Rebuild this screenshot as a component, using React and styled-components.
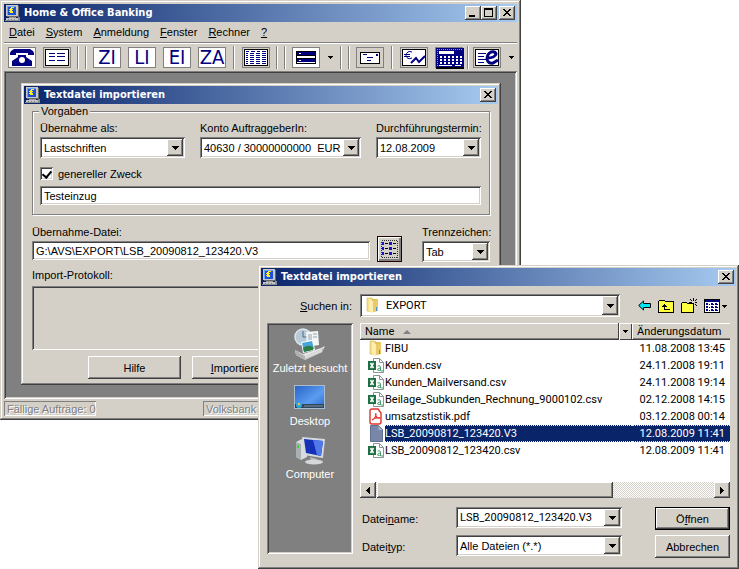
import React from "react";
import styled, { createGlobalStyle, css } from "styled-components";

const face = "#d4d0c8";
const navy = "#000080";
const msSans = `"Liberation Sans", Arial, sans-serif`;
const tahoma = `Roboto, "Liberation Sans", sans-serif`;
const caption = `"DejaVu Sans Condensed", "DejaVu Sans", sans-serif`;

const raised = css`
	box-shadow: inset -1px -1px #404040, inset 1px 1px #fff,
		inset -2px -2px #808080;
`;

const sunken = css`
	box-shadow: inset 1px 1px #808080, inset -1px -1px #fff,
		inset 2px 2px #404040, inset -2px -2px ${face};
`;

const GlobalStyle = createGlobalStyle`
	* {
		box-sizing: border-box;
	}

	body {
		margin: 0;
		background: #fff;
		color: #000;
		font-family: ${msSans};
		font-size: 11px;
		line-height: 12px;
	}

	button, input, select {
		margin: 0;
		border: 0;
		padding: 0;
		border-radius: 0;
		color: inherit;
		font: inherit;
	}

	u {
		text-underline-offset: 1px;
	}

	svg {
		display: block;
	}
`;

const Desktop = styled.main`
	position: relative;
	min-height: 100vh;
	overflow: hidden;
`;

/* ---------- windows ---------- */

const Window = styled.section`
	padding: ${({ $frame }) => $frame || 3}px;
	background: ${face};
	box-shadow: inset -1px -1px #404040, inset 1px 1px ${face},
		inset -2px -2px #808080, inset 2px 2px #fff;
`;

const MainWindow = styled(Window)`
	position: absolute;
	top: 0;
	left: 0;
	width: calc(100% - 218px);
`;

const FileWindow = styled(Window)`
	position: absolute;
	top: 265px;
	left: 258px;
	right: 0;
`;

const Caption = styled.header`
	display: flex;
	align-items: center;
	height: 18px;
	padding: 0 2px 0 1px;
	background: linear-gradient(to right, #0a246a, #a6caf0);
	color: #fff;
`;

const CaptionText = styled.h1`
	flex: 1;
	margin: 0 0 0 3px;
	font: bold 11px/16px ${caption};
	white-space: nowrap;
`;

const CaptionButton = styled.button`
	display: grid;
	place-items: center;
	width: 16px;
	height: 14px;
	margin-left: ${({ $apart }) => ($apart ? 2 : 0)}px;
	background: ${face};
	${raised}
`;

/* ---------- main window ---------- */

const MenuBar = styled.nav`
	display: flex;
	gap: 11px;
	height: 22px;
	padding: 4px 5px;
	border-bottom: 1px solid #fff;
	box-shadow: inset 0 -1px #808080;
`;

const MenuItem = styled.button`
	background: none;
	line-height: 13px;
`;

const Toolbar = styled.div`
	display: flex;
	align-items: center;
	gap: 7px;
	height: 27px;
	padding: 0 4px;
`;

const ToolButton = styled.button`
	display: grid;
	place-items: center;
	flex: none;
	width: 28px;
	height: 21px;
	border: 1px solid #808080;
	background: ${({ $plain }) => ($plain ? face : "#fff")};
	color: ${navy};
	font: 20px/19px "Liberation Sans Narrow", "DejaVu Sans Condensed", sans-serif;
`;

const DropButton = styled.button`
	display: grid;
	place-items: center;
	flex: none;
	width: 7px;
	height: 21px;
	background: none;
`;

const Divider = styled.span`
	flex: none;
	width: 2px;
	height: 23px;
	margin: 0 ${({ $tight }) => ($tight ? -3 : 0)}px;
	border-left: 1px solid #808080;
	border-right: 1px solid #fff;
`;

const DoubleDivider = styled.span`
	display: flex;
	flex: none;
	justify-content: space-between;
	width: 10px;
	margin: 0 -1px;
`;

const Workspace = styled.div`
	padding: 12px 16px 14px 17px;
	background: #808080;
	${sunken}
`;

const StatusBar = styled.footer`
	display: flex;
	justify-content: space-between;
	padding-top: 2px;
	color: #808080;
	text-shadow: 1px 1px #fff;
`;

const StatusPane = styled.span`
	width: ${({ $wide }) => ($wide ? "314px" : "92px")};
	height: 15px;
	padding: 1px 3px;
	box-shadow: inset 1px 1px #808080, inset -1px -1px #fff;
	line-height: 14px;
	white-space: nowrap;
`;

/* ---------- form parts ---------- */

const Field = styled.div`
	display: flex;
	flex-direction: column;
	gap: 3px;
	min-width: 0;
`;

const Label = styled.label`
	line-height: 12px;
	white-space: nowrap;
`;

const TextBox = styled.input`
	width: 100%;
	height: 19px;
	padding: 0 4px;
	background: #fff;
	${sunken}
`;

const ComboBox = styled.div`
	display: flex;
	position: relative;
	height: ${({ $height }) => $height || 21}px;
	padding: 2px;
	background: #fff;
	${sunken}
`;

const ComboSelect = styled.select`
	flex: 1;
	min-width: 0;
	padding-left: ${({ $indent }) => $indent || 2}px;
	appearance: none;
	background: transparent;
	outline: 0;
	font-family: ${({ $wide }) => ($wide ? tahoma : msSans)};
`;

const ComboArrow = styled.span`
	display: grid;
	place-items: center;
	position: absolute;
	top: 2px;
	right: 2px;
	bottom: 2px;
	width: 16px;
	background: ${face};
	pointer-events: none;
	${raised}
`;

const ComboIcon = styled.span`
	position: absolute;
	top: 3px;
	left: 5px;
	pointer-events: none;
`;

const PushButton = styled.button`
	height: 23px;
	background: ${face};
	border: ${({ $default }) => ($default ? "1px solid #000" : "0")};
	${raised}
`;

/* ---------- import dialog ---------- */

const ImportBody = styled.form`
	padding: 1px 8px 3px;
`;

const Group = styled.fieldset`
	min-width: 0;
	margin: 0;
	padding: 4px 8px 9px 7px;
	border: 1px solid #808080;
	box-shadow: 1px 1px #fff, inset 1px 1px #fff;
`;

const GroupTitle = styled.legend`
	margin-left: -1px;
	padding: 0 2px;
	background: ${face};
	line-height: 13px;
`;

const FieldColumns = styled.div`
	display: grid;
	grid-template-columns: 145fr 161fr 105fr;
	column-gap: 15px;
`;

const CheckRow = styled.div`
	display: flex;
	align-items: center;
	gap: 5px;
	margin: 9px 0 6px;
`;

const CheckBox = styled.input`
	position: relative;
	width: 13px;
	height: 13px;
	appearance: none;
	background: #fff;
	${sunken}

	&:checked::after {
		content: "";
		position: absolute;
		top: 2px;
		left: 4px;
		width: 4px;
		height: 7px;
		border: solid #000;
		border-width: 0 2px 2px 0;
		transform: rotate(40deg);
	}
`;

const FileRow = styled.div`
	display: grid;
	grid-template-columns: 1fr 25px 68px;
	margin-top: 11px;
`;

const BrowseButton = styled.button`
	display: grid;
	place-items: center;
	align-self: end;
	height: 26px;
	border: 1px solid #200000;
	background: ${face};
	box-shadow: inset 1px 1px #fff, inset -1px -1px #808080,
		inset -2px -2px #808080;
`;

const SourceField = styled(Field)`
	margin-right: 7px;
`;

const SeparatorField = styled(Field)`
	width: 68px;
`;

const SourceRow = styled(FileRow)`
	grid-template-columns: 1fr 45px 68px;

	${BrowseButton} {
		width: 25px;
	}
`;

const ProtocolLabel = styled.p`
	margin: 7px 0 5px;
`;

const Protocol = styled.div`
	height: 64px;
	${sunken}
`;

const ButtonRow = styled.div`
	display: flex;
	gap: 11px;
	padding: 6px 0 0 56px;

	button {
		width: 93px;
	}
`;

/* ---------- file dialog ---------- */

const FileBody = styled.form`
	display: grid;
	grid-template-columns: 86px 1fr;
	gap: 6px 7px;
	padding: 8px 6px;
`;

const LookInLabel = styled(Label)`
	align-self: center;
	padding-right: 1px;
	text-align: right;
`;

const LookInRow = styled.div`
	display: flex;
	align-items: center;
	justify-content: space-between;
	padding-right: 2px;

	${ComboBox} {
		flex: 0 1 260px;
	}
`;

const NavButtons = styled.div`
	display: flex;
	align-items: center;
	gap: 7px;
`;

const NavButton = styled.button`
	background: none;
`;

const Places = styled.nav`
	display: flex;
	flex-direction: column;
	gap: 7px;
	margin-bottom: 4px;
	padding: 5px 2px;
	background: #808080;
	${sunken}
`;

const Place = styled.button`
	display: flex;
	flex-direction: column;
	align-items: center;
	gap: 2px;
	background: none;
	color: #fff;
	white-space: nowrap;
`;

const FilePane = styled.div`
	display: flex;
	flex-direction: column;
	gap: 9px;
	min-width: 0;
`;

const ListBox = styled.div`
	background: #fff;
`;

const ListArea = styled.div`
	height: 159px;
`;

const FileTable = styled.table`
	width: 100%;
	table-layout: fixed;
	border-spacing: 0;
	font-family: ${tahoma};
`;

const HeadCell = styled.th`
	width: ${({ $width }) => $width || "auto"};
	height: 17px;
	padding: 0 0 0 5px;
	background: ${face};
	box-shadow: inset 0 1px #fff, inset 0 -1px #404040, inset 1px 0 #fff,
		inset 0 -2px #808080;
	font-weight: normal;
	text-align: left;
	line-height: 15px;
`;

const HeadContent = styled.div`
	display: flex;
	align-items: center;
	gap: 9px;
`;

const HeadDrop = styled.button`
	display: grid;
	place-items: center;
	width: 14px;
	height: 17px;
	margin-left: auto;
	border-left: 1px solid #404040;
	box-shadow: inset 1px 1px #fff, inset -1px -1px #404040;
	background: ${face};
`;

const marked = css`
	border-color: #f0e8c8;
	background: #0a246a;
	color: #fff;
`;

const Cell = styled.td`
	padding: 0;
`;

const NameCell = styled.div`
	display: flex;
	height: 17px;
	padding-left: 8px;
`;

const CellText = styled.div`
	flex: 1;
	padding-right: ${({ $date }) => ($date ? 5 : 0)}px;
	border: 1px dotted transparent;
	border-width: 1px 0;
	line-height: 15px;
	text-align: ${({ $date }) => ($date ? "right" : "left")};
	white-space: nowrap;
	${({ $selected }) => $selected && marked}
`;

const IconSlot = styled.span`
	flex: none;
	width: 17px;
`;

const ScrollBar = styled.div`
	display: flex;
	height: 16px;
	background: repeating-conic-gradient(#fff 0 25%, ${face} 0 50%) 0 0 / 2px 2px;
`;

const ScrollArrow = styled.button`
	display: grid;
	place-items: center;
	flex: none;
	width: 16px;
	background: ${face};
	${raised}
`;

const ScrollTrack = styled.div`
	flex: 1;
	padding-left: 1px;
`;

const ScrollThumb = styled.div`
	width: 70%;
	height: 16px;
	background: ${face};
	${raised}
`;

const FileFields = styled.div`
	display: grid;
	grid-template-columns: 96px 1fr 108px;
	row-gap: 5px;

	> label {
		padding: 6px 0 0 2px;
	}

	> button {
		margin-left: 33px;
	}
`;

/* ---------- icons ---------- */

const AppIcon = () => (
	<svg width='16' height='16' viewBox='0 0 16 16' shapeRendering='crispEdges'>
		<path d='M1 0h12v11H1z' fill='#c8c8c8' />
		<path d='M13 1h1v10h-1zM2 11h12v1H2z' fill='#686868' />
		<path d='M2 1h9v9H2z' fill='#1c50d8' />
		<path d='M2 1h9v1H2zM2 1h1v9H2z' fill='#6ca0ff' />
		<path
			d='M6 2h3v1H6zM5 3h2v1H5zM4 4h4v1H4zM5 5h2v1H5zM4 6h4v1H4zM5 7h3v1H5z'
			fill='#ffee20'
		/>
		<path d='M4 12h7v1H4z' fill='#989898' />
		<path d='M1 13h13v2H1z' fill='#c4c4c4' />
		<path d='M0 15h15v1H0zM13 12h2v3h-2z' fill='#8c8c8c' />
		<path d='M3 14h1v1H3zM6 14h1v1H6zM9 14h1v1H9z' fill='#808080' />
	</svg>
);

const Arrow = ({ small }) => (
	<svg width='7' height='4' viewBox='0 0 7 4' shapeRendering='crispEdges'>
		{small ? (
			<path d='M1 0h5v1H1zM2 1h3v1H2zM3 2h1v1H3z' />
		) : (
			<path d='M0 0h7v1H0zM1 1h5v1H1zM2 2h3v1H2zM3 3h1v1H3z' />
		)}
	</svg>
);

const CloseIcon = () => (
	<svg width='8' height='8' viewBox='0 0 8 8' shapeRendering='crispEdges'>
		<path d='M0 0h2v1H0zM6 0h2v1H6zM1 1h2v1H1zM5 1h2v1H5zM2 2h4v1H2zM3 3h2v1H3zM2 4h4v1H2zM1 5h2v1H1zM5 5h2v1H5zM0 6h2v1H0zM6 6h2v1H6z' />
	</svg>
);

const MinimizeIcon = () => (
	<svg width='10' height='10' viewBox='0 0 10 10'>
		<path d='M1 7h6v2H1z' />
	</svg>
);

const MaximizeIcon = () => (
	<svg width='10' height='10' viewBox='0 0 10 10' shapeRendering='crispEdges'>
		<path d='M0 0h9v9H0zM1 2v6h7V2z' fillRule='evenodd' />
	</svg>
);

const PhoneIcon = () => (
	<svg width='24' height='17' viewBox='0 0 24 17' fill={navy}>
		<path d='M4 0h16l3 2 1 2v2h-6V4H6v2H0V4l1-2z' />
		<path d='M8 6h8v2l6 4v5H2v-5l6-4z' />
		<circle cx='12' cy='11' r='3' fill='#fff' />
	</svg>
);

const ListIcon = () => (
	<svg width='24' height='17' viewBox='0 0 24 17' shapeRendering='crispEdges'>
		<path d='M0 0h24v17H0z' />
		<path d='M1 1h22v15H1z' fill='#fff' />
		<path
			d='M4 4h6v1H4zM12 4h8v1h-8zM4 7h6v1H4zM12 7h8v1h-8zM4 11h6v1H4zM12 11h8v1h-8z'
			fill={navy}
		/>
	</svg>
);

const tableRows = [4, 6, 8, 10, 12, 14];

const TableIcon = () => (
	<svg width='24' height='17' viewBox='0 0 24 17' shapeRendering='crispEdges'>
		<path d='M0 0h24v17H0z' />
		<path d='M1 1h22v15H1z' fill='#fff' />
		<path d='M2 2h3v1H2zM7 2h4v1H7zM13 2h3v1h-3zM18 2h4v1h-4z' fill={navy} />
		{tableRows.map(y => (
			<path
				key={y}
				d={`M2 ${y}h2v1H2zM6 ${y}h4v1H6zM12 ${y}h4v1h-4zM18 ${y}h4v1h-4z`}
				fill={navy}
			/>
		))}
	</svg>
);

const ServerIcon = () => (
	<svg width='20' height='13' viewBox='0 0 20 13' shapeRendering='crispEdges'>
		<path d='M0 0h20v13H0z' />
		<path d='M1 1h18v3H1zM1 8h18v3H1z' fill={navy} />
		<path d='M1 5h18v2H1zM3 2h2v1H3zM3 9h2v1H3zM1 11h18v1H1z' fill='#fff' />
	</svg>
);

const MailIcon = () => (
	<svg width='20' height='12' viewBox='0 0 20 12' shapeRendering='crispEdges'>
		<path d='M0 0h20v12H0z' />
		<path d='M1 1h18v10H1z' fill='#fff' />
		<path d='M3 2h4v1H3zM16 2h2v2h-2zM7 5h6v1H7zM7 8h4v1H7z' fill={navy} />
	</svg>
);

const EuroChartIcon = () => (
	<svg width='24' height='17' viewBox='0 0 24 17'>
		<path d='M0 0h24v17H0z' />
		<path d='M1 1h22v15H1z' fill='#fff' />
		<path
			d='M10 3Q5 1 4 6.500Q5 11 10 9M2 5.500h6M2 7.500h6'
			fill='none'
			stroke={navy}
		/>
		<path d='M9 14l5-5 3 4 6-6' fill='none' stroke={navy} strokeWidth='2' />
	</svg>
);

const keys = [0, 1, 2, 3, 4, 5];

const CalculatorIcon = () => (
	<svg width='28' height='21' viewBox='0 0 28 21' shapeRendering='crispEdges'>
		<path d='M0 0h28v21H0z' fill={navy} />
		<path d='M1 1.500h26M1.500 1v17' stroke='#9090d0' strokeDasharray='1 1' />
		<path d='M3 3h15v3H3z' fill='#fff' />
		{[8, 11, 14].map(y =>
			keys.map(i => (
				<path
					key={`${y}-${i}`}
					d={`M${4 + i * 4} ${y}h2v2h-2z`}
					fill='#fff'
				/>
			))
		)}
		<path d='M3 17h13v1H3zM19 17h6v1h-6z' fill='#fff' />
		<path d='M0 19h28v2H0z' />
	</svg>
);

const OnlineIcon = () => (
	<svg width='26' height='17' viewBox='0 0 26 17'>
		<path d='M1 0h24v17H1z' />
		<path d='M2 1h22v15H2z' fill='#fff' />
		<path d='M4 4h8v1H4zM4 7h6v1H4zM4 10h8v1H4zM4 13h6v1H4z' fill={navy} />
		<path
			d='M13 9Q21 9 22 5Q21 2 17 3Q13 5 13 10Q14 15 19 14L24 11'
			fill='none'
			stroke={navy}
			strokeWidth='3'
		/>
	</svg>
);

const BrowseIcon = () => (
	<svg width='17' height='18' viewBox='0 0 17 18' shapeRendering='crispEdges'>
		<path
			d='M.5 .5h16v17H.5z'
			fill='none'
			stroke='#303030'
			strokeDasharray='1 1'
		/>
		{[3, 8, 13].map(y => (
			<g key={y}>
				<path
					d={`M1 ${y - 1}h2v3H1zM8 ${y - 1}h3v3H8z`}
					fill='#1818c0'
				/>
				<path d={`M4 ${y}h3v1H4zM12 ${y}h3v1h-3z`} />
			</g>
		))}
	</svg>
);

const FolderIcon = () => (
	<svg width='16' height='16' viewBox='0 0 16 16'>
		<path d='M2 1h5l1 1v13l-6-1z' fill='#f3df8c' stroke='#cfa93c' strokeWidth='.5' />
		<path d='M7 2h6v12l-5 1z' fill='#e2bc55' />
		<path d='M4 2l4 2v12l-4-2z' fill='#fbefb0' />
		<path d='M8 4l5-2v11l-5 2z' fill='#ecca69' />
		<path d='M11 10h1v4h-1z' fill='#4c94d8' />
	</svg>
);

const CsvIcon = () => (
	<svg width='17' height='17' viewBox='0 0 17 17'>
		<path d='M5.500 1.500h6l4 4v10h-10z' fill='#fff' stroke='#8c9490' />
		<path d='M11.500 1.500v4h4' fill='none' stroke='#8c9490' />
		<path d='M0 4h8v9H0z' fill='#1c7044' />
		<path d='M2.500 6l3 5M5.500 6l-3 5' stroke='#fff' strokeWidth='1.500' />
		<path
			d='M9.500 9q3-1 3 1v4M12.500 11q-3 0-3 2q2 1.500 3-.5M14 13v2'
			fill='none'
			stroke='#48a070'
		/>
	</svg>
);

const PdfIcon = () => (
	<svg width='16' height='17' viewBox='0 0 16 17'>
		<path
			d='M4 1h6l3 4v9q0 2-2 2H4q-2 0-2-2V3q0-2 2-2z'
			fill='#fff'
			stroke='#e03428'
			strokeWidth='1.400'
		/>
		<path
			d='M4 12q4-2 4-6q-1-1 0 2q1 3 4 2q0-1-3 0q-3 0-5 2'
			fill='none'
			stroke='#e03428'
			strokeWidth='1.200'
		/>
	</svg>
);

const BlankIcon = () => (
	<svg width='16' height='17' viewBox='0 0 16 17'>
		<path d='M2.500 .5h8l4 4v12h-12z' fill='#7886a8' stroke='#5f6f96' />
		<path d='M10.500 1v4h4' fill='#a8b2cc' />
	</svg>
);

const RecentIcon = () => (
	<svg width='32' height='32' viewBox='0 0 32 32'>
		<circle cx='9' cy='9' r='8' fill='#b6cad8' stroke='#dce6ea' strokeWidth='1.500' />
		<path d='M9 3v6h5' fill='none' stroke='#55687c' />
		<path d='M12 4l12-1 1 14-12 2z' fill='#f4f6f6' />
		<path d='M14 7h4M14 9h4M14 11h4M19 6h4M19 9h4' stroke='#90a0ac' />
		<path d='M7 14l12-2 2 10-12 3z' fill='#f4fafc' />
		<path d='M8 15l10-2 2 8-10 3z' fill='#48a4d8' />
		<path d='M9 20q5-4 10-1v3l-9 2z' fill='#2c7c48' />
		<path d='M1 22l8 4 18-6 4-2-3 6-17 8-9-5z' fill='#e8e8e6' />
		<path d='M1 22l10 6 19-8-2 4-17 8-9-5z' fill='#b0b2b2' />
		<path d='M11 28l17-7v3l-17 7z' fill='#dcdcda' />
	</svg>
);

const DesktopIcon = () => (
	<svg width='32' height='32' viewBox='0 0 32 32'>
		<defs>
			<linearGradient id='wallpaper' x1='0' y1='0' x2='1' y2='1'>
				<stop offset='0' stopColor='#2864c8' />
				<stop offset='.6' stopColor='#5c9cf0' />
				<stop offset='1' stopColor='#2468d0' />
			</linearGradient>
		</defs>
		<path d='M0 4h31v24H0z' fill='#a8bcd0' />
		<path d='M1 5h29v22H1z' fill='url(#wallpaper)' />
		<path d='M1 23h29v4H1z' fill='#30465c' />
		<path d='M10 24h19v2H10z' fill='#586c80' />
		<circle cx='5' cy='24' r='3' fill='#30a8d8' />
		<path d='M4 22h2v2H4z' fill='#f0c040' />
	</svg>
);

const ComputerIcon = () => (
	<svg width='32' height='32' viewBox='0 0 32 32'>
		<path d='M2 8l6-3 5 2v16l-6 3-5-3z' fill='#d8dcde' />
		<path d='M2 8l5 2v16l-5-3z' fill='#a8b0b4' />
		<path d='M3 11h2v3H3z' fill='#40d040' />
		<path d='M8 3l23 2-2 19-19-3z' fill='#d4dade' />
		<path d='M10 5l19 2-2 15-15-3z' fill='#1430b8' />
		<path d='M19 6l10 1-2 15-4-1z' fill='#5078e8' />
		<path d='M16 23l7 2v3h-6z' fill='#b4babe' />
		<ellipse cx='20' cy='28' rx='9' ry='2.500' fill='#d4d8da' />
	</svg>
);

const BackIcon = () => (
	<svg width='13' height='11' viewBox='0 0 13 11'>
		<path d='M.7 5.500L5.500 1v2.500h7v4h-7V10z' fill='#00e8f8' stroke='#000' />
	</svg>
);

const UpFolderIcon = () => (
	<svg width='16' height='14' viewBox='0 0 16 14' shapeRendering='crispEdges'>
		<path d='M.5 13.500v-11l1-1h5l1 1h8v11z' fill='#ffff40' stroke='#000' />
		<path d='M6 5h1v1h1v1h1v1H7v2h5v1H6V8H4V7h1V6h1z' />
	</svg>
);

const NewFolderIcon = () => (
	<svg width='16' height='16' viewBox='0 0 16 16' shapeRendering='crispEdges'>
		<path d='M.5 14.500v-9l1-1h4l1 1h6v9z' fill='#ffff40' stroke='#000' />
		<path d='M12 0h1v3h-1zM12 5h1v3h-1zM8 4h3v1H8zM14 4h2v1h-2zM9 1h1v1H9zM10 2h1v1h-1zM15 1h1v1h-1zM14 2h1v1h-1zM14 6h1v1h-1zM15 7h1v1h-1z' />
	</svg>
);

const ViewIcon = () => (
	<svg width='24' height='14' viewBox='0 0 24 14' shapeRendering='crispEdges'>
		<path d='M0 0h16v14H0z' />
		<path d='M1 1h14v2H1z' fill={navy} />
		<path d='M1 3h14v10H1z' fill='#fff' />
		{[4, 7, 10].map(y => (
			<g key={y}>
				<path d={`M2 ${y}h2v2H2zM7 ${y}h2v2H7zM11 ${y}h2v2h-2z`} fill={navy} />
				<path d={`M5 ${y + 1}h1v1H5zM9 ${y + 1}h1v1H9zM13 ${y + 1}h1v1h-1z`} />
			</g>
		))}
		<path d='M18 6h5v1h-5zM19 7h3v1h-3zM20 8h1v1h-1z' />
	</svg>
);

const SortIcon = () => (
	<svg width='8' height='4' viewBox='0 0 8 4'>
		<path d='M4 0l4 4H0z' fill='#808080' />
	</svg>
);

const ScrollIcon = ({ right }) => (
	<svg width='4' height='7' viewBox='0 0 4 7' shapeRendering='crispEdges'>
		<path
			d={
				right
					? "M0 0h1v7H0zM1 1h1v5H1zM2 2h1v3H2zM3 3h1v1H3z"
					: "M3 0h1v7H3zM2 1h1v5H2zM1 2h1v3H1zM0 3h1v1H0z"
			}
		/>
	</svg>
);

/* ---------- components ---------- */

const TitleBar = ({ title, sizable }) => (
	<Caption>
		<AppIcon />
		<CaptionText>{title}</CaptionText>
		{sizable && (
			<>
				<CaptionButton aria-label='Minimieren'>
					<MinimizeIcon />
				</CaptionButton>
				<CaptionButton aria-label='Maximieren'>
					<MaximizeIcon />
				</CaptionButton>
			</>
		)}
		<CaptionButton $apart aria-label='Schließen'>
			<CloseIcon />
		</CaptionButton>
	</Caption>
);

const Combo = ({ id, value, height, icon, indent, wide }) => (
	<ComboBox $height={height}>
		{icon && <ComboIcon>{icon}</ComboIcon>}
		<ComboSelect id={id} $indent={indent} $wide={wide}>
			<option>{value}</option>
		</ComboSelect>
		<ComboArrow>
			<Arrow />
		</ComboArrow>
	</ComboBox>
);

const menu = ["Datei", "System", "Anmeldung", "Fenster", "Rechner", "?"];

const places = [
	["Zuletzt besucht", RecentIcon],
	["Desktop", DesktopIcon],
	["Computer", ComputerIcon],
];

const files = [
	{ name: "FIBU", date: "11.08.2008 13:45", Icon: FolderIcon },
	{ name: "Kunden.csv", date: "24.11.2008 19:11", Icon: CsvIcon },
	{ name: "Kunden_Mailversand.csv", date: "24.11.2008 19:14", Icon: CsvIcon },
	{
		name: "Beilage_Subkunden_Rechnung_9000102.csv",
		date: "02.12.2008 14:15",
		Icon: CsvIcon,
	},
	{ name: "umsatzstistik.pdf", date: "03.12.2008 00:14", Icon: PdfIcon },
	{
		name: "LSB_20090812_123420.V3",
		date: "12.08.2009 11:41",
		Icon: BlankIcon,
		selected: true,
	},
	{ name: "LSB_20090812_123420.csv", date: "12.08.2009 11:41", Icon: CsvIcon },
];

const noSubmit = e => e.preventDefault();

function ImportDialog() {
	return (
		<Window>
			<TitleBar title='Textdatei importieren' />
			<ImportBody onSubmit={noSubmit}>
				<Group>
					<GroupTitle>Vorgaben</GroupTitle>
					<FieldColumns>
						<Field>
							<Label htmlFor='kind'>Übernahme als:</Label>
							<Combo id='kind' value='Lastschriften' />
						</Field>
						<Field>
							<Label htmlFor='account'>Konto AuftraggeberIn:</Label>
							<Combo
								id='account'
								value={"40630 / 30000000000\u00a0 EUR"}
							/>
						</Field>
						<Field>
							<Label htmlFor='due'>Durchführungstermin:</Label>
							<Combo id='due' value='12.08.2009' />
						</Field>
					</FieldColumns>
					<CheckRow>
						<CheckBox type='checkbox' id='purpose' defaultChecked />
						<Label htmlFor='purpose'>genereller Zweck</Label>
					</CheckRow>
					<TextBox aria-label='Zweck' defaultValue='Testeinzug' />
				</Group>
				<SourceRow>
					<SourceField>
						<Label htmlFor='source'>Übernahme-Datei:</Label>
						<TextBox
							id='source'
							defaultValue='G:\AVS\EXPORT\LSB_20090812_123420.V3'
						/>
					</SourceField>
					<BrowseButton type='button' aria-label='Datei wählen'>
						<BrowseIcon />
					</BrowseButton>
					<SeparatorField>
						<Label htmlFor='separator'>Trennzeichen:</Label>
						<Combo id='separator' value='Tab' />
					</SeparatorField>
				</SourceRow>
				<ProtocolLabel>Import-Protokoll:</ProtocolLabel>
				<Protocol />
				<ButtonRow>
					<PushButton type='button'>Hilfe</PushButton>
					<PushButton type='button'>
						<u>I</u>mportieren
					</PushButton>
				</ButtonRow>
			</ImportBody>
		</Window>
	);
}

function BankingWindow() {
	return (
		<MainWindow $frame={4}>
			<TitleBar title='Home & Office Banking' sizable />
			<MenuBar>
				{menu.map(item => (
					<MenuItem key={item}>
						<u>{item[0]}</u>
						{item.slice(1)}
					</MenuItem>
				))}
			</MenuBar>
			<Toolbar>
				<ToolButton aria-label='Telefon'>
					<PhoneIcon />
				</ToolButton>
				<ToolButton $plain aria-label='Liste'>
					<ListIcon />
				</ToolButton>
				<DoubleDivider>
					<Divider />
					<Divider />
				</DoubleDivider>
				<ToolButton>ZI</ToolButton>
				<ToolButton>LI</ToolButton>
				<ToolButton>EI</ToolButton>
				<ToolButton>ZA</ToolButton>
				<Divider />
				<ToolButton $plain aria-label='Tabelle'>
					<TableIcon />
				</ToolButton>
				<DoubleDivider>
					<Divider />
					<Divider />
				</DoubleDivider>
				<ToolButton aria-label='Server'>
					<ServerIcon />
				</ToolButton>
				<DropButton aria-label='Server wählen'>
					<Arrow small />
				</DropButton>
				<DoubleDivider>
					<Divider />
					<Divider />
				</DoubleDivider>
				<ToolButton $plain aria-label='Nachricht'>
					<MailIcon />
				</ToolButton>
				<Divider />
				<ToolButton $plain aria-label='Kurse'>
					<EuroChartIcon />
				</ToolButton>
				<ToolButton $plain aria-label='Rechner'>
					<CalculatorIcon />
				</ToolButton>
				<Divider $tight />
				<ToolButton $plain aria-label='Online'>
					<OnlineIcon />
				</ToolButton>
				<DropButton aria-label='Online wählen'>
					<Arrow small />
				</DropButton>
			</Toolbar>
			<Workspace>
				<ImportDialog />
			</Workspace>
			<StatusBar>
				<StatusPane>Fällige Aufträge: 0</StatusPane>
				<StatusPane $wide>Volksbank</StatusPane>
			</StatusBar>
		</MainWindow>
	);
}

function FileDialog() {
	return (
		<FileWindow>
			<TitleBar title='Textdatei importieren' />
			<FileBody onSubmit={noSubmit}>
				<LookInLabel htmlFor='folder'>
					<u>S</u>uchen in:
				</LookInLabel>
				<LookInRow>
					<Combo
						id='folder'
						value='EXPORT'
						height={23}
						icon={<FolderIcon />}
						indent={24}
						wide
					/>
					<NavButtons>
						<NavButton type='button' aria-label='Zurück'>
							<BackIcon />
						</NavButton>
						<NavButton type='button' aria-label='Übergeordneter Ordner'>
							<UpFolderIcon />
						</NavButton>
						<NavButton type='button' aria-label='Neuer Ordner'>
							<NewFolderIcon />
						</NavButton>
						<NavButton type='button' aria-label='Ansicht'>
							<ViewIcon />
						</NavButton>
					</NavButtons>
				</LookInRow>
				<Places>
					{places.map(([name, Icon]) => (
						<Place key={name} type='button'>
							<Icon />
							{name}
						</Place>
					))}
				</Places>
				<FilePane>
					<ListBox>
						<ListArea>
							<FileTable>
								<thead>
									<tr>
										<HeadCell>
											<HeadContent>
												Name
												<SortIcon />
												<HeadDrop type='button' aria-label='Filter'>
													<Arrow small />
												</HeadDrop>
											</HeadContent>
										</HeadCell>
										<HeadCell $width='98px'>Änderungsdatum</HeadCell>
									</tr>
								</thead>
								<tbody>
									{files.map(({ name, date, Icon, selected }) => (
										<tr key={name}>
											<Cell>
												<NameCell>
													<IconSlot>
														<Icon />
													</IconSlot>
													<CellText $selected={selected}>
														{name}
													</CellText>
												</NameCell>
											</Cell>
											<Cell>
												<CellText $date $selected={selected}>
													{date}
												</CellText>
											</Cell>
										</tr>
									))}
								</tbody>
							</FileTable>
						</ListArea>
						<ScrollBar>
							<ScrollArrow type='button' aria-label='Nach links'>
								<ScrollIcon />
							</ScrollArrow>
							<ScrollTrack>
								<ScrollThumb />
							</ScrollTrack>
							<ScrollArrow type='button' aria-label='Nach rechts'>
								<ScrollIcon right />
							</ScrollArrow>
						</ScrollBar>
					</ListBox>
					<FileFields>
						<Label htmlFor='filename'>
							Datei<u>n</u>ame:
						</Label>
						<Combo
							id='filename'
							value='LSB_20090812_123420.V3'
							wide
						/>
						<PushButton $default>
							Ö<u>f</u>fnen
						</PushButton>
						<Label htmlFor='filetype'>
							Datei<u>t</u>yp:
						</Label>
						<Combo id='filetype' value='Alle Dateien (*.*)' />
						<PushButton type='button'>Abbrechen</PushButton>
					</FileFields>
				</FilePane>
			</FileBody>
		</FileWindow>
	);
}

export default function App() {
	return (
		<Desktop>
			<GlobalStyle />
			<BankingWindow />
			<FileDialog />
		</Desktop>
	);
}
